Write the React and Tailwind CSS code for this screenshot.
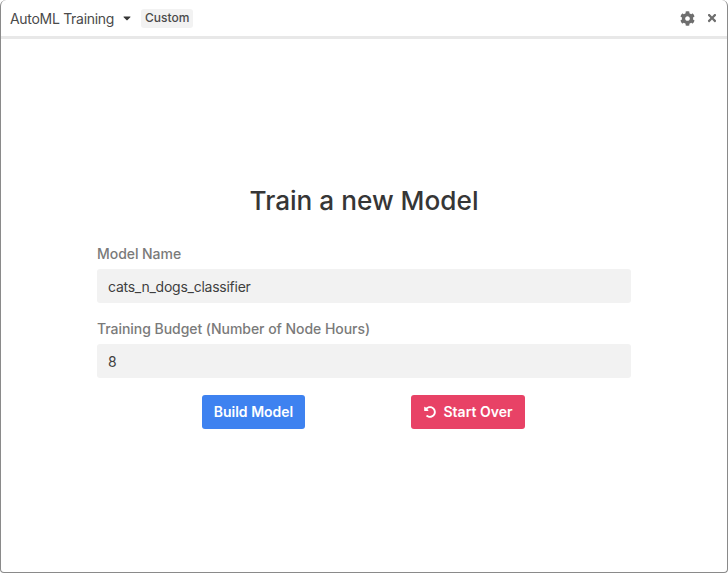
import React from "react";
import { FaCog, FaTimes, FaUndoAlt, FaCaretDown } from "react-icons/fa";

const Field = ({ label, value }) => (
  <div>
    <label className="block text-[14px] leading-5 font-medium tracking-[-0.05px] text-[#7a7a7a] mb-[5px]">
      {label}
    </label>
    <div className="h-[34px] flex items-center px-[11px] bg-[#f2f2f2] rounded-[3px] text-[14px] tracking-[-0.25px] text-[#3f3f3f]">
      {value}
    </div>
  </div>
);

const App = () => {
  return (
    <div className="h-[573px] w-[728px] bg-white border-x border-b border-[#8a8a8a] rounded-t-[6px] rounded-b-[4px] flex flex-col font-['Inter',sans-serif] overflow-hidden">
      {/* Header */}
      <div className="h-[39px] shrink-0 flex items-center border-b-[3px] border-[#e8e8e8] pl-[9px] pr-[9px]">
        <span className="text-[14px] tracking-[-0.3px] text-[#4a4a4a]">AutoML Training</span>
        <FaCaretDown size={12} className="ml-[7px] text-[#363636]" />
        <span className="ml-[8px] h-[19px] px-[4px] flex items-center rounded-[3px] bg-[#f2f2f2] text-[12px] font-medium text-[#4a4a4a]">
          Custom
        </span>
        <div className="ml-auto flex items-center gap-[11px]">
          <FaCog size={15} className="text-[#6e6e6e]" />
          <FaTimes size={12} className="text-[#6e6e6e]" />
        </div>
      </div>

      {/* Form */}
      <div className="px-[96px] pt-[144px]">
        <h1 className="text-center text-[26.2px] leading-9 font-medium text-[#363636] mb-[25px]">
          Train a new Model
        </h1>
        <div className="flex flex-col gap-[16px]">
          <Field label="Model Name" value="cats_n_dogs_classifier" />
          <Field label="Training Budget (Number of Node Hours)" value="8" />
        </div>
        <div className="flex mt-[17px] pl-[105px] gap-[106px]">
          <button className="h-[34px] w-[103px] pb-px rounded-[3px] bg-[#3e82f0] text-white text-[14px] font-semibold">
            Build Model
          </button>
          <button className="h-[34px] w-[114px] pb-px rounded-[3px] bg-[#e84266] text-white text-[14px] font-semibold flex items-center justify-center gap-[8px]">
            <FaUndoAlt size={12} />
            Start Over
          </button>
        </div>
      </div>
    </div>
  );
};

export default App;
